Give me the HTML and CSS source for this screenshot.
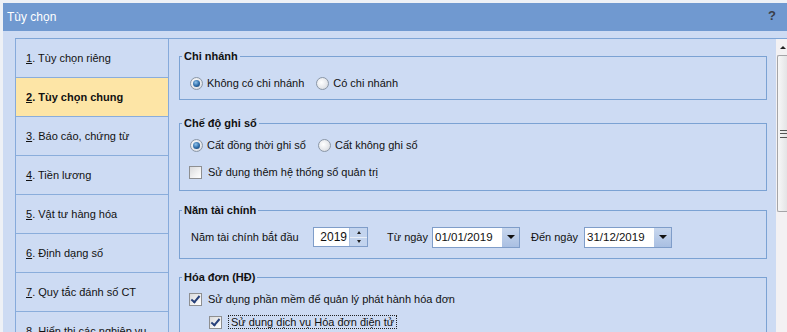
FILE: index.html
```html
<!DOCTYPE html>
<html lang="vi">
<head>
  <meta charset="UTF-8">
  <title>Tùy chọn</title>
  <link rel="stylesheet" href="styles.css">
</head>
<body>
  <div class="dialog">
    <div class="titlebar">
      <span class="title">Tùy chọn</span>
      <span class="help">?</span>
    </div>

    <div class="frame">
      <div class="nav">
        <div class="nav-item"><u>1</u>. Tùy chọn riêng</div>
        <div class="nav-item active"><u>2</u>. Tùy chọn chung</div>
        <div class="nav-item"><u>3</u>. Báo cáo, chứng từ</div>
        <div class="nav-item"><u>4</u>. Tiền lương</div>
        <div class="nav-item"><u>5</u>. Vật tư hàng hóa</div>
        <div class="nav-item"><u>6</u>. Định dạng số</div>
        <div class="nav-item"><u>7</u>. Quy tắc đánh số CT</div>
        <div class="nav-item"><u>8</u>. Hiển thị các nghiệp vụ</div>
      </div>

      <div class="content">
        <fieldset class="group g-branch">
          <legend>Chi nhánh</legend>
          <div class="row">
            <label class="opt"><span class="radio checked"></span>Không có chi nhánh</label>
            <label class="opt"><span class="radio"></span>Có chi nhánh</label>
          </div>
        </fieldset>

        <fieldset class="group g-book">
          <legend>Chế độ ghi sổ</legend>
          <div class="row">
            <label class="opt"><span class="radio checked"></span>Cất đồng thời ghi sổ</label>
            <label class="opt"><span class="radio"></span>Cất không ghi sổ</label>
          </div>
          <div class="row gap">
            <label class="opt"><span class="check"></span>Sử dụng thêm hệ thống sổ quản trị</label>
          </div>
        </fieldset>

        <fieldset class="group g-year">
          <legend>Năm tài chính</legend>
          <div class="row fields">
            <span class="lbl-start">Năm tài chính bắt đầu</span>
            <div class="spin">
              <span class="spin-val">2019</span>
              <span class="spin-btns">
                <span class="spin-up"></span>
                <span class="spin-down"></span>
              </span>
            </div>
            <span class="lbl-from">Từ ngày</span>
            <div class="combo">
              <span class="combo-val">01/01/2019</span>
              <span class="combo-btn"></span>
            </div>
            <span class="lbl-to">Đến ngày</span>
            <div class="combo">
              <span class="combo-val">31/12/2019</span>
              <span class="combo-btn"></span>
            </div>
          </div>
        </fieldset>

        <fieldset class="group g-invoice">
          <legend>Hóa đơn (HĐ)</legend>
          <div class="row">
            <label class="opt"><span class="check checked"></span>Sử dụng phần mềm để quản lý phát hành hóa đơn</label>
          </div>
          <div class="row gap sub">
            <label class="opt"><span class="check checked"></span><span class="focus">Sử dụng dịch vụ Hóa đơn điện tử</span></label>
          </div>
        </fieldset>
      </div>

      <div class="scrollbar">
        <div class="arrow-up"></div>
        <div class="thumb"><span class="grip"></span></div>
      </div>
    </div>
  </div>
</body>
</html>
```

FILE: styles.css
```css
html, body {
  margin: 0;
  padding: 0;
}
body {
  width: 787px;
  height: 332px;
  overflow: hidden;
  background-color: #eef1f6;
  font-family: "Liberation Sans", Arial, sans-serif;
  font-size: 11px;
  color: #111;
}
.dialog {
  margin: 3px 0 0 3px;
  height: 329px;
  background-color: #cddbf3;
  display: flex;
  flex-direction: column;
  overflow: hidden;
}
.titlebar {
  height: 28px;
  flex-shrink: 0;
  background-color: #7099d0;
  display: flex;
  align-items: center;
  justify-content: space-between;
  padding: 0 11px 0 4px;
}
.title {
  color: #fff;
  font-size: 12px;
  margin-top: -1px;
}
.help {
  color: #3b3f48;
  font-weight: bold;
  font-size: 13px;
  margin-top: -3px;
}
.frame {
  margin: 7px 0 0 12px;
  border-top: 1px solid #7ea5d6;
  display: flex;
  flex: 1;
  min-height: 0;
}
.nav {
  width: 152px;
  border-left: 1px solid #86aadb;
  border-right: 1px solid #86aadb;
  flex-shrink: 0;
}
.nav-item {
  height: 38px;
  border-bottom: 1px solid #8aaddb;
  display: flex;
  align-items: center;
  padding-left: 10px;
  white-space: nowrap;
}
.nav-item.active {
  background-color: #fde5a6;
  font-weight: bold;
}
.content {
  flex: 1;
  padding: 0 9px 0 10px;
}
.group {
  margin: 0;
  padding: 0 0 0 10px;
  border: 1px solid #7ba2d3;
}
.group legend {
  font-weight: bold;
  margin-left: -8px;
  padding: 0 2px;
  line-height: 14px;
}
.g-branch { margin-top: 10px; padding-top: 12px; padding-bottom: 8px; }
.g-book { margin-top: 16px; padding-top: 7px; padding-bottom: 10px; }
.g-year { margin-top: 12px; padding-top: 10px; padding-bottom: 11px; }
.g-invoice { margin-top: 11px; padding-top: 7px; padding-bottom: 10px; }

.row {
  display: flex;
  align-items: center;
  height: 16px;
}
.row.gap {
  margin-top: 11px;
}
.row.sub {
  margin-top: 7px;
  padding-left: 20px;
}
.opt {
  display: flex;
  align-items: center;
  margin-right: 12px;
  white-space: nowrap;
}
.radio {
  width: 11px;
  height: 11px;
  border: 1px solid #8b97a6;
  border-radius: 50%;
  background: radial-gradient(circle at 40% 40%, #ffffff 0%, #e4e6ea 60%, #c9ccd2 100%);
  margin-right: 4px;
  position: relative;
}
.radio.checked::after {
  content: "";
  position: absolute;
  left: 2px;
  top: 2px;
  width: 7px;
  height: 7px;
  border-radius: 50%;
  background: radial-gradient(circle at 40% 35%, #8fc3ec 0%, #2c6aa6 55%, #16375d 100%);
}
.check {
  width: 11px;
  height: 11px;
  border: 1px solid #8e8f91;
  background: linear-gradient(135deg, #d9dadc 0%, #f2f2f2 60%, #ffffff 100%);
  margin-right: 6px;
  margin-left: -1px;
  position: relative;
  flex-shrink: 0;
}
.check.checked::after {
  content: "";
  position: absolute;
  left: 3px;
  top: 0px;
  width: 3px;
  height: 7px;
  border: solid #27407a;
  border-width: 0 2px 2px 0;
  transform: rotate(40deg);
}
.focus {
  outline: 1px dotted #222;
  padding: 0 2px;
  margin-left: 1px;
}

.fields {
  height: 20px;
}
.lbl-start { margin-left: 1px; width: 122px; }
.lbl-from { margin-left: 19px; width: 45px; }
.lbl-to { margin-left: 11px; width: 53px; }
.spin {
  display: flex;
  width: 53px;
  height: 18px;
  border: 1px solid #7f9dc9;
  background-color: #fff;
}
.spin-val {
  flex: 1;
  text-align: right;
  line-height: 18px;
  padding-right: 2px;
  font-size: 12px;
}
.spin-btns {
  width: 17px;
  display: flex;
  flex-direction: column;
  background-color: #c3d4ee;
  border-left: 1px solid #a9bfe0;
}
.spin-up, .spin-down {
  flex: 1;
  display: flex;
  align-items: center;
  justify-content: center;
}
.spin-up { border-bottom: 1px solid #e9eff8; }
.spin-up::after {
  content: "";
  border: 2px solid transparent;
  border-bottom: 3px solid #222;
  border-top: 0;
}
.spin-down::after {
  content: "";
  border: 2px solid transparent;
  border-top: 3px solid #222;
  border-bottom: 0;
}
.combo {
  display: flex;
  width: 86px;
  height: 19px;
  border: 1px solid #7f9dc9;
  background-color: #fff;
}
.combo-val {
  flex: 1;
  line-height: 19px;
  padding-left: 2px;
  font-size: 11.5px;
}
.combo-btn {
  width: 17px;
  background: linear-gradient(#c8d7ee, #a9bfe2);
  display: flex;
  align-items: center;
  justify-content: center;
}
.combo-btn::after {
  content: "";
  border: 4px solid transparent;
  border-top: 4px solid #111;
  border-bottom: 0;
}

.scrollbar {
  width: 11px;
  flex-shrink: 0;
  background-color: #f3f1f3;
}
.arrow-up {
  width: 0;
  height: 0;
  margin: 7px 0 0 4px;
  border: 3px solid transparent;
  border-bottom: 3px solid #222;
  border-top: 0;
}
.thumb {
  margin: 6px 0 0 1px;
  height: 155px;
  border: 1px solid #a5a5a8;
  border-right: 0;
  border-radius: 2px 0 0 2px;
  background: linear-gradient(90deg, #f7f7f7, #e4e4e6);
  display: flex;
  align-items: center;
  justify-content: flex-end;
}
.grip {
  width: 7px;
  height: 6px;
  border-top: 1px solid #555;
  border-bottom: 1px solid #555;
  position: relative;
}
.grip::after {
  content: "";
  position: absolute;
  left: 0;
  right: 0;
  top: 2px;
  border-top: 1px solid #555;
}
```
